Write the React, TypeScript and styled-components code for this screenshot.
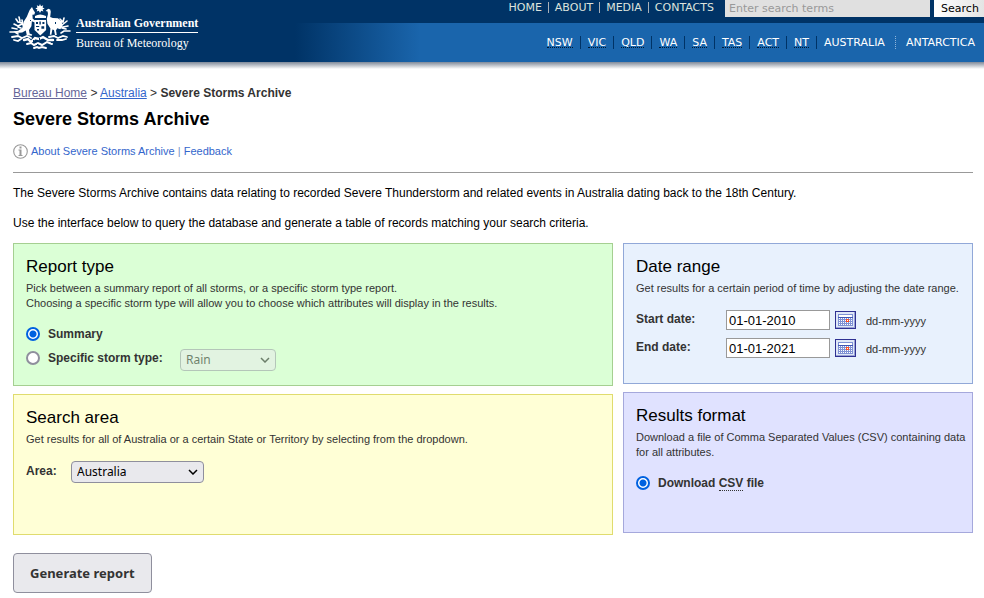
import React from "react";
import styled, { createGlobalStyle } from "styled-components";

const GlobalStyle = createGlobalStyle`
  *, *::before, *::after { box-sizing: border-box; }
  body {
    margin: 0;
    background: #fff;
    color: #333;
    font: 12px/16px "Liberation Sans", Arial, sans-serif;
  }
  h1, h2, p, form { margin: 0; padding: 0; }
  a { color: #3366cc; }
`;

const verdana = `"DejaVu Sans", Verdana, sans-serif`;

const Header = styled.header`
  display: flex;
  justify-content: space-between;
  height: 62px;
  background:
    linear-gradient(#003366, #003366) 0 0 / 100% 23px no-repeat,
    linear-gradient(90deg, #003366 295px, #1a65ac 420px);
`;

const Shade = styled.div`
  height: 7px;
  background: linear-gradient(#7f8a99, #fff);
`;

const Brand = styled.a`
  display: flex;
  gap: 5px;
  padding: 3px 0 0 9px;
  color: #fff;
  text-decoration: none;
`;

const BrandText = styled.span`
  display: flex;
  flex-direction: column;
  padding-top: 12px;
  font: 12px/17px "Liberation Serif", "Times New Roman", serif;
`;

const BrandName = styled.strong`
  border-bottom: 1px solid #fff;
`;

const BrandUnit = styled.span`
  line-height: 20px;
`;

const Navs = styled.div`
  display: flex;
  flex-direction: column;
  align-items: flex-end;
`;

const TopBar = styled.div`
  display: flex;
  height: 23px;
`;

const TopLinks = styled.nav`
  display: flex;
  padding: 2px 5px 0 0;
  a {
    height: 11px;
    padding: 0 6px;
    color: #dde3dd;
    font: 11px/11px ${verdana};
    text-decoration: none;
  }
  a + a { border-left: 1px solid #a9b0b8; }
`;

const Search = styled.form`
  display: flex;
  gap: 4px;
  height: 17px;
`;

const SearchBox = styled.input`
  width: 205px;
  border: 0;
  padding: 0 4px;
  background: #e0e0e0;
  font: 11px/16px ${verdana};
  &::placeholder { color: #999; opacity: 1; }
`;

const SearchButton = styled.button`
  width: 50px;
  border: 0;
  padding: 0 4px 0 6px;
  background: linear-gradient(90deg, #fff, #e4e4e4);
  color: #000;
  font: 11px/16px ${verdana};
`;

const StateLinks = styled.nav`
  display: flex;
  padding: 13px 2px 0 0;
`;

const StateLink = styled.a<{ $divider?: "solid" | "dotted" }>`
  height: 13px;
  padding: 0 7px;
  border-left: ${(p) => (p.$divider === "dotted" ? "1px dotted #8fb4d9" : p.$divider ? "1px solid #003366" : "0")};
  color: #fff;
  font: 11px/13px ${verdana};
  text-decoration: none;
  ${(p) => (p.$divider === "dotted" ? "margin-left: 3px; padding-left: 10px;" : "")}
  abbr {
    display: block;
    height: 12px;
    border-bottom: 1px dotted #001a33;
    text-decoration: none;
  }
`;

const Main = styled.main`
  padding: 16px 11px 5px 13px;
`;

const Crumbs = styled.nav`
  a:first-child { color: #666699; }
`;

const Title = styled.h1`
  margin-top: 6px;
  color: #000;
  font-size: 18px;
  line-height: 24px;
`;

const AboutLine = styled.div`
  display: flex;
  align-items: center;
  gap: 3px;
  height: 16px;
  margin-top: 12px;
  color: #7a93c4;
  font-size: 11px;
  a { text-decoration: none; }
`;

const Rule = styled.hr`
  height: 1px;
  margin: 13px 0 12px;
  border: 0;
  background: #999;
`;

const Intro = styled.p`
  margin-bottom: 14px;
  color: #000;
`;

const Panels = styled.div`
  display: grid;
  grid-template-columns: 12fr 7fr;
  gap: 10px;
  margin-top: -2px;
`;

const Column = styled.div`
  display: flex;
  flex-direction: column;
  gap: 8px;
`;

const Panel = styled.section<{ $fill: string; $line: string; $tall?: boolean }>`
  min-height: ${(p) => (p.$tall ? 143 : 141)}px;
  padding: 13px 4px 12px 12px;
  border: 1px solid ${(p) => p.$line};
  background: ${(p) => p.$fill};
`;

const PanelTitle = styled.h2`
  color: #000;
  font-size: 17px;
  font-weight: normal;
  line-height: 20px;
`;

const Hint = styled.p`
  margin-top: 4px;
  font-size: 11px;
  line-height: 15px;
`;

const Fields = styled.div<{ $gap?: number }>`
  display: flex;
  flex-direction: column;
  gap: ${(p) => p.$gap ?? 0}px;
  margin-top: 14px;
`;

const Line = styled.div`
  display: flex;
  align-items: flex-start;
  min-height: 22px;
`;

const FieldLabel = styled.label<{ $width?: number; $middle?: boolean }>`
  width: ${(p) => (p.$width ? `${p.$width}px` : "auto")};
  font-weight: bold;
  line-height: ${(p) => (p.$middle ? 20 : 18)}px;
`;

const Radio = styled.input`
  appearance: none;
  flex: none;
  width: 14px;
  height: 14px;
  margin: 2px 8px 0 0;
  border: 2px solid #8f8f9d;
  border-radius: 50%;
  background: #fff;
  &:checked {
    border-color: #0061e0;
    background: radial-gradient(circle, #0061e0 3px, #fff 4px);
  }
`;

const Select = styled.select<{ $size: number }>`
  appearance: none;
  width: ${(p) => p.$size}px;
  height: 22px;
  padding: 0 5px;
  border: 1px solid #8f8f9d;
  border-radius: 4px;
  background: #e9e9ed
    url("data:image/svg+xml,%3Csvg xmlns='http://www.w3.org/2000/svg' width='10' height='6'%3E%3Cpath d='M1 1l4 4 4-4' fill='none' stroke='black' stroke-width='1.5'/%3E%3C/svg%3E")
    no-repeat right 5px center;
  color: #000;
  font: 12px/20px "Noto Sans", "Open Sans", sans-serif;
  &:disabled { opacity: 0.5; }
`;

const DateInput = styled.input`
  width: 104px;
  height: 20px;
  padding: 0 2px;
  border: 1px solid #999;
  background: #fff;
  color: #000;
  font: 13px/18px "Liberation Sans", Arial, sans-serif;
`;

const CalendarButton = styled.button`
  width: 21px;
  height: 18px;
  margin: 1px 10px 0 5px;
  padding: 0;
  border: 0;
  background: none;
  svg { display: block; }
`;

const Format = styled.span`
  padding-top: 3px;
  font-size: 11px;
`;

const Abbr = styled.abbr`
  border-bottom: 1px dotted #333;
  text-decoration: none;
`;

const Submit = styled.button`
  height: 40px;
  margin-top: 18px;
  padding: 0 16px;
  border: 1px solid #8f8f9d;
  border-radius: 4px;
  background: #e9e9ed;
  color: #333;
  font: bold 13px/18px "Noto Sans", "Open Sans", sans-serif;
`;

function Crest() {
  return (
    <svg width="62" height="47" viewBox="0 0 62 47" fill="#fff" aria-hidden="true">
      {/* Commonwealth star */}
      <path d="M31 1l1 2.2 2.2-1-.6 2.2 2 1-2 1 .8 2-2.2-.6L31 10l-1.2-2.2-2.2.6.8-2-2-1 2-1-.6-2.2 2.2 1z" />
      <path d="M26 13q5-3 11 0v2H26z" />
      {/* kangaroo */}
      <path d="M23 4l1.4 3 1.6 2.5-.6 2-2 .2.3 4 3 2.4-.8 1.4-3-1.2-.5 5-2.4 3.6.6 3.6 2.6 1-.4 1.2-5-.5-1-4.6-3.6 1.8-6 .6-3-1.4 5-.8 4-2.8 1.6-6.6 3-4.6 2.2-5.4.8-1.6z" />
      {/* emu */}
      <path d="M36.6 8l2.6-2.2 2 .6.6 2.4-.6 5.2 2.6 1 5.2.2 3.6 3.2 1 5.4-2.4 2.4-3-1-1.2 2.4.8 4.4h-1.8l-1-5-1.6-.6-1 5.4h-1.6l.6-6.4-3-4.6-.6-5 1.2-4.8-.4-2.6z" />
      {/* shield */}
      <path d="M25.5 17h11.6v10l-5.8 5.4-5.8-5.4z" />
      <path d="M27 19h2v2h-2zM30.4 18.4h1.4v3h-1.4zM33.4 19h2v2h-2zM27 23h3.2v1h-3.2zM32.4 23.2h2.8v2.6h-2.8zM28 26h2v1.6h-2z" fill="#003366" />
      {/* wattle sprays and scroll */}
      <g fill="none" stroke="#fff" strokeLinecap="round">
        <path d="M7 16l2 3 4 1M10 14l1 4M5 21l4 2 4-2M3 25l5 1M1 29l5 0 3 2M13 17l1 5M9 24l3 1" strokeWidth="1.6" />
        <path d="M55 15l-1 4-3 0M58 18l-5 4M59 23l-5 1M61 28l-6 0-3 2M53 25l4 1M51 16l2 2" strokeWidth="1.6" />
        <path d="M3 34l6-1 4 2 5-2 4 2M5 37l4 1 3-2M40 34l5-1 4 2 5-2 4 1M48 37l5 0 4-1" strokeWidth="1.8" />
        <path d="M15 37l4-1 3 3 4-4 4 1 4-2 5 3 5 0" strokeWidth="2.4" />
        <path d="M18 41l4-1 3 2 4-2 4 2 5-3 5 2M25 45l3-1 2 1 3-1 4 1" strokeWidth="2" />
      </g>
      <path d="M17 38h1v1h-1zM24 37h1v2h-1zM30 35h1v2h-1zM35 38h1v1h-1zM28 41h1v2h-1zM42 39h1v1h-1zM21 17h1v1h-1zM46 19h1v2h-1z" fill="#003366" />
    </svg>
  );
}

function InfoIcon() {
  return (
    <svg width="15" height="15" viewBox="0 0 15 15" aria-hidden="true">
      <circle cx="7.5" cy="7.5" r="6.8" fill="none" stroke="#999" strokeWidth="1.1" />
      <path d="M6.5 2.5h2v2h-2zM5.5 5.5h3v5.5h1v1h-4v-1h1V6.5h-1z" fill="#999" />
    </svg>
  );
}

function CalendarIcon() {
  return (
    <svg width="21" height="18" viewBox="0 0 21 18" shapeRendering="crispEdges" aria-hidden="true">
      <path d="M0 0h21v18H0z" fill="#2f3192" />
      <path d="M1 1h19v16H1z" fill="#9aa3d5" />
      <path d="M1 1h18v15H1z" fill="#dfe7f7" />
      <path d="M3 3h15v12H3z" fill="#7f92d4" />
      <path d="M4 4h13v2H4z" fill="#fff" />
      <path d="M3 6h15v1H3z" fill="#3f55b5" />
      <path
        d="M4.5 7v8M6.5 7v8M8.5 7v8M10.5 7v8M12.5 7v8M14.5 7v8M16.5 7v8"
        stroke="#fff"
        strokeDasharray="1 1"
      />
      <path d="M11 8h3v3h-3z" fill="#ff4d20" />
      <path d="M12 9h1v1h-1z" fill="#fff" />
    </svg>
  );
}

function DateField({ id, label, value }: { id: string; label: string; value: string }) {
  return (
    <Line>
      <FieldLabel $width={90} htmlFor={id}>{label}</FieldLabel>
      <DateInput id={id} defaultValue={value} />
      <CalendarButton type="button" aria-label={`Choose ${label}`}>
        <CalendarIcon />
      </CalendarButton>
      <Format>dd-mm-yyyy</Format>
    </Line>
  );
}

const states = ["NSW", "VIC", "QLD", "WA", "SA", "TAS", "ACT", "NT"];

export default function App() {
  return (
    <>
      <GlobalStyle />
      <Header>
        <Brand href="#">
          <Crest />
          <BrandText>
            <BrandName>Australian Government</BrandName>
            <BrandUnit>Bureau of Meteorology</BrandUnit>
          </BrandText>
        </Brand>
        <Navs>
          <TopBar>
            <TopLinks>
              {["HOME", "ABOUT", "MEDIA", "CONTACTS"].map((t) => (
                <a href="#" key={t}>{t}</a>
              ))}
            </TopLinks>
            <Search>
              <SearchBox aria-label="Search terms" placeholder="Enter search terms" />
              <SearchButton type="button">Search</SearchButton>
            </Search>
          </TopBar>
          <StateLinks>
            {states.map((s, i) => (
              <StateLink href="#" key={s} $divider={i ? "solid" : undefined}>
                <abbr>{s}</abbr>
              </StateLink>
            ))}
            <StateLink href="#" $divider="solid">AUSTRALIA</StateLink>
            <StateLink href="#" $divider="dotted">ANTARCTICA</StateLink>
          </StateLinks>
        </Navs>
      </Header>
      <Shade />
      <Main>
        <Crumbs>
          <a href="#">Bureau Home</a> &gt; <a href="#">Australia</a> &gt; <strong>Severe Storms Archive</strong>
        </Crumbs>
        <Title>Severe Storms Archive</Title>
        <AboutLine>
          <InfoIcon />
          <span>
            <a href="#">About Severe Storms Archive</a> | <a href="#">Feedback</a>
          </span>
        </AboutLine>
        <Rule />
        <Intro>
          The Severe Storms Archive contains data relating to recorded Severe Thunderstorm and related events in
          Australia dating back to the 18th Century.
        </Intro>
        <Intro>
          Use the interface below to query the database and generate a table of records matching your search criteria.
        </Intro>
        <form>
          <Panels>
            <Column>
              <Panel $tall $fill="#dbffd6" $line="#a5cf91">
                <PanelTitle>Report type</PanelTitle>
                <Hint>
                  Pick between a summary report of all storms, or a specific storm type report.
                  <br />
                  Choosing a specific storm type will allow you to choose which attributes will display in the results.
                </Hint>
                <Fields $gap={2}>
                  <Line>
                    <Radio type="radio" name="report" id="summary" defaultChecked />
                    <FieldLabel htmlFor="summary">Summary</FieldLabel>
                  </Line>
                  <Line>
                    <Radio type="radio" name="report" id="specific" />
                    <FieldLabel $width={132} htmlFor="specific">Specific storm type:</FieldLabel>
                    <Select $size={96} aria-label="Storm type" disabled><option>Rain</option></Select>
                  </Line>
                </Fields>
              </Panel>
              <Panel $fill="#ffffd6" $line="#e0dc6e">
                <PanelTitle>Search area</PanelTitle>
                <Hint>Get results for all of Australia or a certain State or Territory by selecting from the dropdown.</Hint>
                <Fields>
                  <Line>
                    <FieldLabel $width={45} $middle htmlFor="area">Area:</FieldLabel>
                    <Select $size={133} id="area"><option>Australia</option></Select>
                  </Line>
                </Fields>
              </Panel>
            </Column>
            <Column>
              <Panel $fill="#e8f1fd" $line="#91a8d8">
                <PanelTitle>Date range</PanelTitle>
                <Hint>Get results for a certain period of time by adjusting the date range.</Hint>
                <Fields $gap={6}>
                  <DateField id="start" label="Start date:" value="01-01-2010" />
                  <DateField id="end" label="End date:" value="01-01-2021" />
                </Fields>
              </Panel>
              <Panel $fill="#e0e2ff" $line="#a5a8dc">
                <PanelTitle>Results format</PanelTitle>
                <Hint>Download a file of Comma Separated Values (CSV) containing data for all attributes.</Hint>
                <Fields>
                  <Line>
                    <Radio type="radio" name="format" id="csv" defaultChecked />
                    <FieldLabel htmlFor="csv">Download <Abbr>CSV</Abbr> file</FieldLabel>
                  </Line>
                </Fields>
              </Panel>
            </Column>
          </Panels>
          <Submit type="button">Generate report</Submit>
        </form>
      </Main>
    </>
  );
}
